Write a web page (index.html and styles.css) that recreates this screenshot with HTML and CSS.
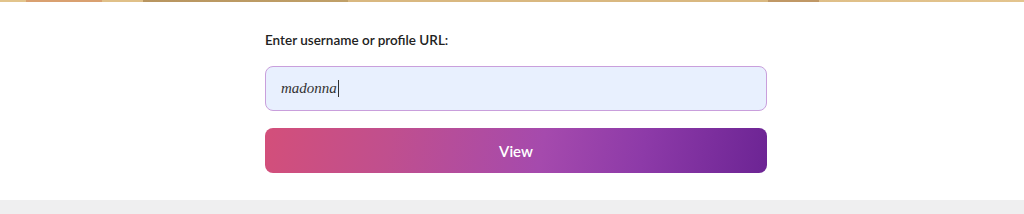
FILE: index.html
```html
<!DOCTYPE html>
<html lang="en">
<head>
    <meta charset="UTF-8">
    <meta name="viewport" content="width=device-width, initial-scale=1.0">
    <title>Profile Viewer</title>
    <link rel="stylesheet" href="styles.css">
</head>
<body>
    <div class="banner-edge"></div>

    <div class="container">
        <form class="lookup-form" onsubmit="return false;">
            <label for="username" class="lookup-label">Enter username or profile URL:</label>
            <div class="input-wrap">
                <span class="input-text">madonna</span><span class="caret"></span>
            </div>
            <button type="submit" class="view-btn">View</button>
        </form>
    </div>

    <div class="footer-band"></div>
</body>
</html>
```

FILE: styles.css
```css
* {
    margin: 0;
    padding: 0;
    box-sizing: border-box;
}

body {
    font-family: 'Lato', 'Open Sans', sans-serif;
    background: #ffffff;
    height: 214px;
    overflow: hidden;
    padding-left: 8px;
}

.banner-edge {
    height: 2px;
    margin-left: -8px;
    background: linear-gradient(90deg,
        #e2c48c 0%, #e2c48c 2.5%,
        #d9a070 2.5%, #d9a070 10%,
        #e0c088 10%, #e0c088 14%,
        #b89560 14%, #c0a068 34%,
        #d9b880 34%, #d9b880 75%,
        #c09866 75%, #c09866 80%,
        #dfbf88 80%, #e3c48e 100%);
}

.container {
    max-width: 502px;
    margin: 0 auto;
    padding-top: 29px;
}

.lookup-form {
    display: flex;
    flex-direction: column;
}

.lookup-label {
    font-size: 13.5px;
    font-weight: 600;
    color: #222;
    margin-bottom: 17px;
    line-height: 18px;
}

.input-wrap {
    height: 45px;
    background: #e8f0fe;
    border: 1.5px solid #c99fdc;
    border-radius: 8px;
    padding: 0 15px;
    display: flex;
    align-items: center;
}

.input-text {
    font-family: 'Liberation Serif', serif;
    font-style: italic;
    font-size: 15px;
    color: #333;
}

.caret {
    display: inline-block;
    width: 1px;
    height: 17px;
    background: #333;
    margin-left: 1px;
}

.view-btn {
    margin-top: 17px;
    height: 45px;
    border: none;
    border-radius: 8px;
    background: linear-gradient(100deg, #d34f7a 0%, #c04f8e 25%, #a54aad 55%, #8d3aa8 75%, #6c2494 100%);
    color: #fff;
    font-family: 'Lato', 'Open Sans', sans-serif;
    font-size: 15px;
    font-weight: 600;
    cursor: pointer;
}

.footer-band {
    margin-top: 27px;
    margin-left: -8px;
    height: 14px;
    background: #efeff0;
}
```
